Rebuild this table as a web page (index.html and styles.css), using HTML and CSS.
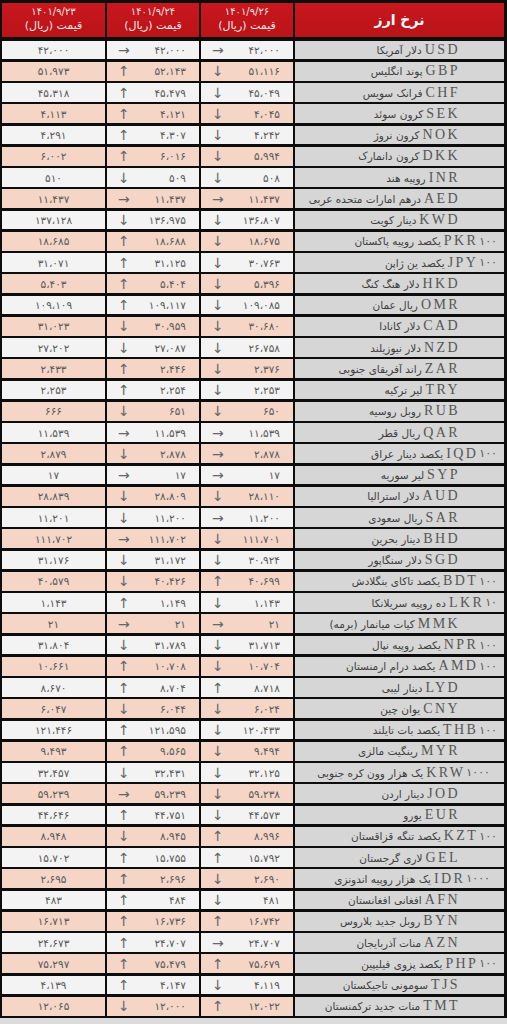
FILE: index.html
```html
<!DOCTYPE html>
<html lang="fa">
<head>
<meta charset="utf-8">
<title>نرخ ارز</title>
<link rel="stylesheet" href="styles.css">
</head>
<body>
<div class="board">
  <div class="row head">
    <div class="hcell title">نرخ ارز</div>
    <div class="hcell"><span class="date">۱۴۰۱/۹/۲۶</span><span class="unit">قیمت (ریال)</span></div>
    <div class="hcell"><span class="date">۱۴۰۱/۹/۲۴</span><span class="unit">قیمت (ریال)</span></div>
    <div class="hcell"><span class="date">۱۴۰۱/۹/۲۳</span><span class="unit">قیمت (ریال)</span></div>
  </div>

  <div class="row odd"><div class="name"><span class="code">USD</span><span class="fa">دلار آمریکا</span></div><div class="val"><span class="ar">→</span><span class="num">۴۲،۰۰۰</span></div><div class="val"><span class="ar">→</span><span class="num">۴۲،۰۰۰</span></div><div class="val plain"><span class="num">۴۲،۰۰۰</span></div></div>
  <div class="row even"><div class="name"><span class="code">GBP</span><span class="fa">پوند انگلیس</span></div><div class="val"><span class="ar">↓</span><span class="num">۵۱،۱۱۶</span></div><div class="val"><span class="ar">↑</span><span class="num">۵۲،۱۴۳</span></div><div class="val plain"><span class="num">۵۱،۹۷۳</span></div></div>
  <div class="row odd"><div class="name"><span class="code">CHF</span><span class="fa">فرانک سویس</span></div><div class="val"><span class="ar">↓</span><span class="num">۴۵،۰۴۹</span></div><div class="val"><span class="ar">↑</span><span class="num">۴۵،۴۷۹</span></div><div class="val plain"><span class="num">۴۵،۳۱۸</span></div></div>
  <div class="row even"><div class="name"><span class="code">SEK</span><span class="fa">کرون سوئد</span></div><div class="val"><span class="ar">↓</span><span class="num">۴،۰۴۵</span></div><div class="val"><span class="ar">↑</span><span class="num">۴،۱۲۱</span></div><div class="val plain"><span class="num">۴،۱۱۳</span></div></div>
  <div class="row odd"><div class="name"><span class="code">NOK</span><span class="fa">کرون نروژ</span></div><div class="val"><span class="ar">↓</span><span class="num">۴،۲۴۲</span></div><div class="val"><span class="ar">↑</span><span class="num">۴،۳۰۷</span></div><div class="val plain"><span class="num">۴،۲۹۱</span></div></div>
  <div class="row even"><div class="name"><span class="code">DKK</span><span class="fa">کرون دانمارک</span></div><div class="val"><span class="ar">↓</span><span class="num">۵،۹۹۴</span></div><div class="val"><span class="ar">↑</span><span class="num">۶،۰۱۶</span></div><div class="val plain"><span class="num">۶،۰۰۲</span></div></div>
  <div class="row odd"><div class="name"><span class="code">INR</span><span class="fa">روپیه هند</span></div><div class="val"><span class="ar">↓</span><span class="num">۵۰۸</span></div><div class="val"><span class="ar">↓</span><span class="num">۵۰۹</span></div><div class="val plain"><span class="num">۵۱۰</span></div></div>
  <div class="row even"><div class="name"><span class="code">AED</span><span class="fa">درهم امارات متحده عربی</span></div><div class="val"><span class="ar">→</span><span class="num">۱۱،۴۳۷</span></div><div class="val"><span class="ar">→</span><span class="num">۱۱،۴۳۷</span></div><div class="val plain"><span class="num">۱۱،۴۳۷</span></div></div>
  <div class="row odd"><div class="name"><span class="code">KWD</span><span class="fa">دینار کویت</span></div><div class="val"><span class="ar">↓</span><span class="num">۱۳۶،۸۰۷</span></div><div class="val"><span class="ar">↓</span><span class="num">۱۳۶،۹۷۵</span></div><div class="val plain"><span class="num">۱۳۷،۱۲۸</span></div></div>
  <div class="row even"><div class="name m100"><span class="mult">۱۰۰</span><span class="code">PKR</span><span class="fa">یکصد روپیه پاکستان</span></div><div class="val"><span class="ar">↓</span><span class="num">۱۸،۶۷۵</span></div><div class="val"><span class="ar">↑</span><span class="num">۱۸،۶۸۸</span></div><div class="val plain"><span class="num">۱۸،۶۸۵</span></div></div>
  <div class="row odd"><div class="name m100"><span class="mult">۱۰۰</span><span class="code">JPY</span><span class="fa">یکصد ین ژاپن</span></div><div class="val"><span class="ar">↓</span><span class="num">۳۰،۷۶۳</span></div><div class="val"><span class="ar">↑</span><span class="num">۳۱،۱۲۵</span></div><div class="val plain"><span class="num">۳۱،۰۷۱</span></div></div>
  <div class="row even"><div class="name"><span class="code">HKD</span><span class="fa">دلار هنگ کنگ</span></div><div class="val"><span class="ar">↓</span><span class="num">۵،۳۹۶</span></div><div class="val"><span class="ar">↑</span><span class="num">۵،۴۰۴</span></div><div class="val plain"><span class="num">۵،۴۰۳</span></div></div>
  <div class="row odd"><div class="name"><span class="code">OMR</span><span class="fa">ریال عمان</span></div><div class="val"><span class="ar">↓</span><span class="num">۱۰۹،۰۸۵</span></div><div class="val"><span class="ar">↑</span><span class="num">۱۰۹،۱۱۷</span></div><div class="val plain"><span class="num">۱۰۹،۱۰۹</span></div></div>
  <div class="row even"><div class="name"><span class="code">CAD</span><span class="fa">دلار کانادا</span></div><div class="val"><span class="ar">↓</span><span class="num">۳۰،۶۸۰</span></div><div class="val"><span class="ar">↓</span><span class="num">۳۰،۹۵۹</span></div><div class="val plain"><span class="num">۳۱،۰۲۳</span></div></div>
  <div class="row odd"><div class="name"><span class="code">NZD</span><span class="fa">دلار نیوزیلند</span></div><div class="val"><span class="ar">↓</span><span class="num">۲۶،۷۵۸</span></div><div class="val"><span class="ar">↓</span><span class="num">۲۷،۰۸۷</span></div><div class="val plain"><span class="num">۲۷،۲۰۲</span></div></div>
  <div class="row even"><div class="name"><span class="code">ZAR</span><span class="fa">راند آفریقای جنوبی</span></div><div class="val"><span class="ar">↓</span><span class="num">۲،۳۷۶</span></div><div class="val"><span class="ar">↑</span><span class="num">۲،۴۴۶</span></div><div class="val plain"><span class="num">۲،۴۳۳</span></div></div>
  <div class="row odd"><div class="name"><span class="code">TRY</span><span class="fa">لیر ترکیه</span></div><div class="val"><span class="ar">↓</span><span class="num">۲،۲۵۳</span></div><div class="val"><span class="ar">↑</span><span class="num">۲،۲۵۴</span></div><div class="val plain"><span class="num">۲،۲۵۳</span></div></div>
  <div class="row even"><div class="name"><span class="code">RUB</span><span class="fa">روبل روسیه</span></div><div class="val"><span class="ar">↓</span><span class="num">۶۵۰</span></div><div class="val"><span class="ar">↓</span><span class="num">۶۵۱</span></div><div class="val plain"><span class="num">۶۶۶</span></div></div>
  <div class="row odd"><div class="name"><span class="code">QAR</span><span class="fa">ریال قطر</span></div><div class="val"><span class="ar">→</span><span class="num">۱۱،۵۳۹</span></div><div class="val"><span class="ar">→</span><span class="num">۱۱،۵۳۹</span></div><div class="val plain"><span class="num">۱۱،۵۳۹</span></div></div>
  <div class="row even"><div class="name m100"><span class="mult">۱۰۰</span><span class="code">IQD</span><span class="fa">یکصد دینار عراق</span></div><div class="val"><span class="ar">→</span><span class="num">۲،۸۷۸</span></div><div class="val"><span class="ar">↓</span><span class="num">۲،۸۷۸</span></div><div class="val plain"><span class="num">۲،۸۷۹</span></div></div>
  <div class="row odd"><div class="name"><span class="code">SYP</span><span class="fa">لیر سوریه</span></div><div class="val"><span class="ar">→</span><span class="num">۱۷</span></div><div class="val"><span class="ar">→</span><span class="num">۱۷</span></div><div class="val plain"><span class="num">۱۷</span></div></div>
  <div class="row even"><div class="name"><span class="code">AUD</span><span class="fa">دلار استرالیا</span></div><div class="val"><span class="ar">↓</span><span class="num">۲۸،۱۱۰</span></div><div class="val"><span class="ar">↓</span><span class="num">۲۸،۸۰۹</span></div><div class="val plain"><span class="num">۲۸،۸۳۹</span></div></div>
  <div class="row odd"><div class="name"><span class="code">SAR</span><span class="fa">ریال سعودی</span></div><div class="val"><span class="ar">→</span><span class="num">۱۱،۲۰۰</span></div><div class="val"><span class="ar">↓</span><span class="num">۱۱،۲۰۰</span></div><div class="val plain"><span class="num">۱۱،۲۰۱</span></div></div>
  <div class="row even"><div class="name"><span class="code">BHD</span><span class="fa">دینار بحرین</span></div><div class="val"><span class="ar">↓</span><span class="num">۱۱۱،۷۰۱</span></div><div class="val"><span class="ar">→</span><span class="num">۱۱۱،۷۰۲</span></div><div class="val plain"><span class="num">۱۱۱،۷۰۲</span></div></div>
  <div class="row odd"><div class="name"><span class="code">SGD</span><span class="fa">دلار سنگاپور</span></div><div class="val"><span class="ar">↓</span><span class="num">۳۰،۹۲۴</span></div><div class="val"><span class="ar">↓</span><span class="num">۳۱،۱۷۲</span></div><div class="val plain"><span class="num">۳۱،۱۷۶</span></div></div>
  <div class="row even"><div class="name m100"><span class="mult">۱۰۰</span><span class="code">BDT</span><span class="fa">یکصد تاکای بنگلادش</span></div><div class="val"><span class="ar">↑</span><span class="num">۴۰،۶۹۹</span></div><div class="val"><span class="ar">↓</span><span class="num">۴۰،۴۲۶</span></div><div class="val plain"><span class="num">۴۰،۵۷۹</span></div></div>
  <div class="row odd"><div class="name m100"><span class="mult">۱۰</span><span class="code">LKR</span><span class="fa">ده روپیه سریلانکا</span></div><div class="val"><span class="ar">↓</span><span class="num">۱،۱۴۳</span></div><div class="val"><span class="ar">↑</span><span class="num">۱،۱۴۹</span></div><div class="val plain"><span class="num">۱،۱۴۳</span></div></div>
  <div class="row even"><div class="name"><span class="code">MMK</span><span class="fa">کیات میانمار (برمه)</span></div><div class="val"><span class="ar">→</span><span class="num">۲۱</span></div><div class="val"><span class="ar">→</span><span class="num">۲۱</span></div><div class="val plain"><span class="num">۲۱</span></div></div>
  <div class="row odd"><div class="name m100"><span class="mult">۱۰۰</span><span class="code">NPR</span><span class="fa">یکصد روپیه نپال</span></div><div class="val"><span class="ar">↓</span><span class="num">۳۱،۷۱۳</span></div><div class="val"><span class="ar">↓</span><span class="num">۳۱،۷۸۹</span></div><div class="val plain"><span class="num">۳۱،۸۰۴</span></div></div>
  <div class="row even"><div class="name m100"><span class="mult">۱۰۰</span><span class="code">AMD</span><span class="fa">یکصد درام ارمنستان</span></div><div class="val"><span class="ar">↓</span><span class="num">۱۰،۷۰۴</span></div><div class="val"><span class="ar">↑</span><span class="num">۱۰،۷۰۸</span></div><div class="val plain"><span class="num">۱۰،۶۶۱</span></div></div>
  <div class="row odd"><div class="name"><span class="code">LYD</span><span class="fa">دینار لیبی</span></div><div class="val"><span class="ar">↑</span><span class="num">۸،۷۱۸</span></div><div class="val"><span class="ar">↑</span><span class="num">۸،۷۰۴</span></div><div class="val plain"><span class="num">۸،۶۷۰</span></div></div>
  <div class="row even"><div class="name"><span class="code">CNY</span><span class="fa">یوان چین</span></div><div class="val"><span class="ar">↓</span><span class="num">۶،۰۲۴</span></div><div class="val"><span class="ar">↓</span><span class="num">۶،۰۴۴</span></div><div class="val plain"><span class="num">۶،۰۴۷</span></div></div>
  <div class="row odd"><div class="name m100"><span class="mult">۱۰۰</span><span class="code">THB</span><span class="fa">یکصد بات تایلند</span></div><div class="val"><span class="ar">↓</span><span class="num">۱۲۰،۴۳۳</span></div><div class="val"><span class="ar">↑</span><span class="num">۱۲۱،۵۹۵</span></div><div class="val plain"><span class="num">۱۲۱،۴۴۶</span></div></div>
  <div class="row even"><div class="name"><span class="code">MYR</span><span class="fa">رینگیت مالزی</span></div><div class="val"><span class="ar">↓</span><span class="num">۹،۴۹۴</span></div><div class="val"><span class="ar">↑</span><span class="num">۹،۵۶۵</span></div><div class="val plain"><span class="num">۹،۴۹۳</span></div></div>
  <div class="row odd"><div class="name m1000"><span class="mult">۱۰۰۰</span><span class="code">KRW</span><span class="fa">یک هزار وون کره جنوبی</span></div><div class="val"><span class="ar">↓</span><span class="num">۳۲،۱۲۵</span></div><div class="val"><span class="ar">↓</span><span class="num">۳۲،۴۳۱</span></div><div class="val plain"><span class="num">۳۲،۴۵۷</span></div></div>
  <div class="row even"><div class="name"><span class="code">JOD</span><span class="fa">دینار اردن</span></div><div class="val"><span class="ar">↓</span><span class="num">۵۹،۲۳۸</span></div><div class="val"><span class="ar">→</span><span class="num">۵۹،۲۳۹</span></div><div class="val plain"><span class="num">۵۹،۲۳۹</span></div></div>
  <div class="row odd"><div class="name"><span class="code">EUR</span><span class="fa">یورو</span></div><div class="val"><span class="ar">↓</span><span class="num">۴۴،۵۷۳</span></div><div class="val"><span class="ar">↑</span><span class="num">۴۴،۷۵۱</span></div><div class="val plain"><span class="num">۴۴،۶۴۶</span></div></div>
  <div class="row even"><div class="name m100"><span class="mult">۱۰۰</span><span class="code">KZT</span><span class="fa">یکصد تنگه قزاقستان</span></div><div class="val"><span class="ar">↑</span><span class="num">۸،۹۹۶</span></div><div class="val"><span class="ar">↓</span><span class="num">۸،۹۴۵</span></div><div class="val plain"><span class="num">۸،۹۴۸</span></div></div>
  <div class="row odd"><div class="name"><span class="code">GEL</span><span class="fa">لاری گرجستان</span></div><div class="val"><span class="ar">↑</span><span class="num">۱۵،۷۹۲</span></div><div class="val"><span class="ar">↑</span><span class="num">۱۵،۷۵۵</span></div><div class="val plain"><span class="num">۱۵،۷۰۲</span></div></div>
  <div class="row even"><div class="name m1000"><span class="mult">۱۰۰۰</span><span class="code">IDR</span><span class="fa">یک هزار روپیه اندونزی</span></div><div class="val"><span class="ar">↓</span><span class="num">۲،۶۹۰</span></div><div class="val"><span class="ar">↑</span><span class="num">۲،۶۹۶</span></div><div class="val plain"><span class="num">۲،۶۹۵</span></div></div>
  <div class="row odd"><div class="name"><span class="code">AFN</span><span class="fa">افغانی افغانستان</span></div><div class="val"><span class="ar">↓</span><span class="num">۴۸۱</span></div><div class="val"><span class="ar">↑</span><span class="num">۴۸۴</span></div><div class="val plain"><span class="num">۴۸۳</span></div></div>
  <div class="row even"><div class="name"><span class="code">BYN</span><span class="fa">روبل جدید بلاروس</span></div><div class="val"><span class="ar">↑</span><span class="num">۱۶،۷۴۲</span></div><div class="val"><span class="ar">↑</span><span class="num">۱۶،۷۳۶</span></div><div class="val plain"><span class="num">۱۶،۷۱۳</span></div></div>
  <div class="row odd"><div class="name"><span class="code">AZN</span><span class="fa">منات آذربایجان</span></div><div class="val"><span class="ar">→</span><span class="num">۲۴،۷۰۷</span></div><div class="val"><span class="ar">↑</span><span class="num">۲۴،۷۰۷</span></div><div class="val plain"><span class="num">۲۴،۶۷۳</span></div></div>
  <div class="row even"><div class="name m100"><span class="mult">۱۰۰</span><span class="code">PHP</span><span class="fa">یکصد پزوی فیلیپین</span></div><div class="val"><span class="ar">↑</span><span class="num">۷۵،۶۷۹</span></div><div class="val"><span class="ar">↑</span><span class="num">۷۵،۴۷۹</span></div><div class="val plain"><span class="num">۷۵،۲۹۷</span></div></div>
  <div class="row odd"><div class="name"><span class="code">TJS</span><span class="fa">سومونی تاجیکستان</span></div><div class="val"><span class="ar">↓</span><span class="num">۴،۱۱۹</span></div><div class="val"><span class="ar">↑</span><span class="num">۴،۱۴۷</span></div><div class="val plain"><span class="num">۴،۱۳۹</span></div></div>
  <div class="row even"><div class="name"><span class="code">TMT</span><span class="fa">منات جدید ترکمنستان</span></div><div class="val"><span class="ar">↑</span><span class="num">۱۲،۰۲۲</span></div><div class="val"><span class="ar">↓</span><span class="num">۱۲،۰۰۰</span></div><div class="val plain"><span class="num">۱۲،۰۶۵</span></div></div>
</div>
</body>
</html>
```

FILE: styles.css
```css
html, body {
  margin: 0;
  padding: 0;
}
body {
  width: 507px;
  height: 1024px;
  overflow: hidden;
  background: #dcdcdc;
  font-family: "DejaVu Sans", sans-serif;
}
.board {
  background: #0d0d0d;
  padding: 2.7px 3px 2px 2px;
  display: flex;
  flex-direction: column;
  gap: 2.5px;
}
.row {
  display: grid;
  direction: rtl;
  grid-template-columns: 209px 92px 92px 103px;
  column-gap: 2px;
  height: 18.75px;
}
.row.head {
  height: 34.3px;
  margin-bottom: 1.2px;
}
.hcell {
  background: linear-gradient(#c8171d, #b91419);
  color: #fff;
  display: flex;
  flex-direction: column;
  align-items: center;
  justify-content: center;
  gap: 1px;
}
.hcell .date {
  font-size: 10px;
  line-height: 12px;
  letter-spacing: 1px;
  direction: ltr;
  unicode-bidi: isolate;
  color: #f6e6e6;
}
.hcell .unit {
  font-size: 11px;
  line-height: 14px;
  color: #f6e6e6;
}
.hcell.title {
  font-size: 14px;
  font-weight: bold;
  color: #fff;
}
.name {
  background: #d6d6d6;
  color: #4a4a4a;
  display: flex;
  align-items: center;
  justify-content: flex-start;
  padding-right: 44px;
  gap: 3px;
  white-space: nowrap;
  overflow: hidden;
}
.name.m100 { padding-right: 7px; }
.name.m1000 { padding-right: 14px; }
.code {
  font-family: "Liberation Serif", serif;
  font-size: 14px;
  letter-spacing: 2.4px;
  direction: ltr;
  unicode-bidi: isolate;
  color: #555;
}
.mult {
  font-size: 11px;
  margin-left: -2px;
  color: #555;
}
.fa {
  font-size: 10.5px;
  color: #3e3e3e;
}
.val {
  direction: ltr;
  display: flex;
  align-items: center;
  justify-content: space-between;
  padding: 0 13px 0 11px;
  color: #585858;
  font-size: 10.5px;
}
.odd .val { background: #f3f3f3; }
.even .val { background: #f4d5c6; }
.val.plain {
  justify-content: center;
  padding: 0;
}
.num {
  direction: ltr;
  unicode-bidi: isolate;
  letter-spacing: 0.4px;
}
.ar {
  font-family: "DejaVu Sans", sans-serif;
  font-size: 14px;
  line-height: 14px;
  color: #666;
}
```
